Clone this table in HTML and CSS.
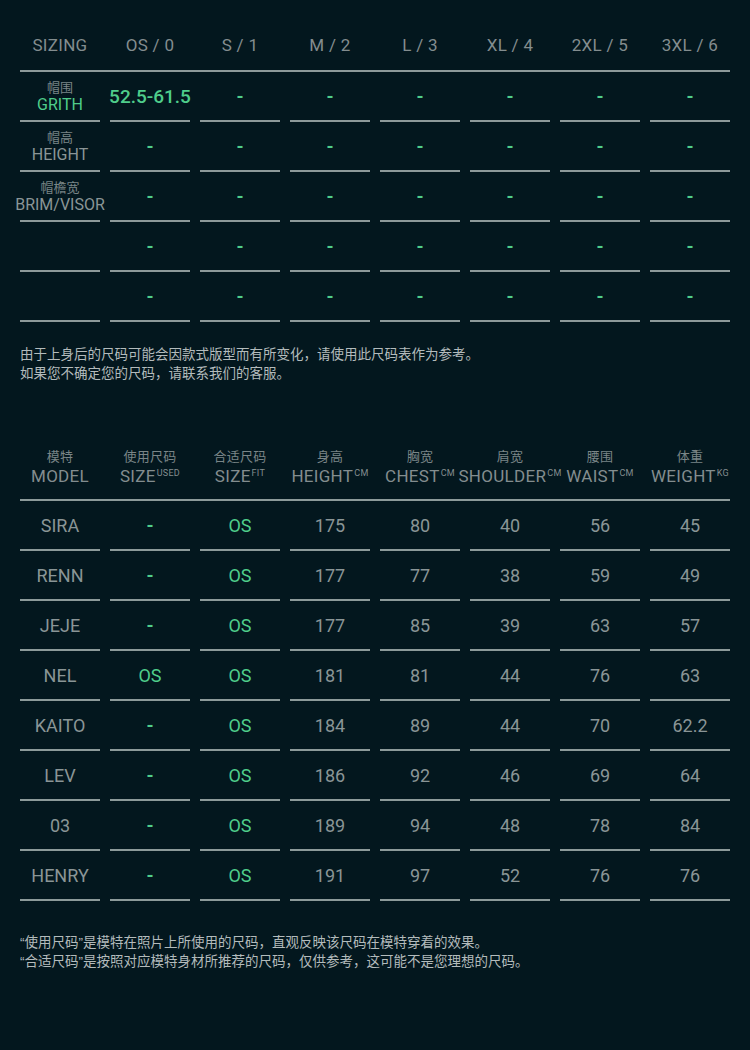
FILE: index.html
```html
<!DOCTYPE html>
<html lang="zh">
<head>
<meta charset="utf-8">
<title>Sizing</title>
<link rel="stylesheet" href="styles.css">
</head>
<body>
<main class="page">
  <section class="table sizing">
    <div class="thead">
      <div class="th">SIZING</div>
      <div class="th">OS / 0</div>
      <div class="th">S / 1</div>
      <div class="th">M / 2</div>
      <div class="th">L / 3</div>
      <div class="th">XL / 4</div>
      <div class="th">2XL / 5</div>
      <div class="th">3XL / 6</div>
    </div>
    <div class="tbody">
      <div class="td label"><span class="zh">帽围</span><span class="en green">GRITH</span></div>
      <div class="td green big">52.5-61.5</div>
      <div class="td green dash">-</div><div class="td green dash">-</div><div class="td green dash">-</div><div class="td green dash">-</div><div class="td green dash">-</div><div class="td green dash">-</div>

      <div class="td label"><span class="zh">帽高</span><span class="en">HEIGHT</span></div>
      <div class="td green dash">-</div><div class="td green dash">-</div><div class="td green dash">-</div><div class="td green dash">-</div><div class="td green dash">-</div><div class="td green dash">-</div><div class="td green dash">-</div>

      <div class="td label"><span class="zh">帽檐宽</span><span class="en">BRIM/VISOR</span></div>
      <div class="td green dash">-</div><div class="td green dash">-</div><div class="td green dash">-</div><div class="td green dash">-</div><div class="td green dash">-</div><div class="td green dash">-</div><div class="td green dash">-</div>

      <div class="td label"></div>
      <div class="td green dash">-</div><div class="td green dash">-</div><div class="td green dash">-</div><div class="td green dash">-</div><div class="td green dash">-</div><div class="td green dash">-</div><div class="td green dash">-</div>

      <div class="td label"></div>
      <div class="td green dash">-</div><div class="td green dash">-</div><div class="td green dash">-</div><div class="td green dash">-</div><div class="td green dash">-</div><div class="td green dash">-</div><div class="td green dash">-</div>
    </div>
  </section>

  <p class="note first-note">由于上身后的尺码可能会因款式版型而有所变化，请使用此尺码表作为参考。<br>如果您不确定您的尺码，请联系我们的客服。</p>

  <section class="table models">
    <div class="thead tall">
      <div class="th two"><span class="zh">模特</span><span class="en">MODEL</span></div>
      <div class="th two"><span class="zh">使用尺码</span><span class="en">SIZE<sup>USED</sup></span></div>
      <div class="th two"><span class="zh">合适尺码</span><span class="en">SIZE<sup>FIT</sup></span></div>
      <div class="th two"><span class="zh">身高</span><span class="en">HEIGHT<sup>CM</sup></span></div>
      <div class="th two"><span class="zh">胸宽</span><span class="en">CHEST<sup>CM</sup></span></div>
      <div class="th two"><span class="zh">肩宽</span><span class="en">SHOULDER<sup>CM</sup></span></div>
      <div class="th two"><span class="zh">腰围</span><span class="en">WAIST<sup>CM</sup></span></div>
      <div class="th two"><span class="zh">体重</span><span class="en">WEIGHT<sup>KG</sup></span></div>
    </div>
    <div class="tbody">
      <div class="td">SIRA</div><div class="td green dash">-</div><div class="td green">OS</div><div class="td">175</div><div class="td">80</div><div class="td">40</div><div class="td">56</div><div class="td">45</div>
      <div class="td">RENN</div><div class="td green dash">-</div><div class="td green">OS</div><div class="td">177</div><div class="td">77</div><div class="td">38</div><div class="td">59</div><div class="td">49</div>
      <div class="td">JEJE</div><div class="td green dash">-</div><div class="td green">OS</div><div class="td">177</div><div class="td">85</div><div class="td">39</div><div class="td">63</div><div class="td">57</div>
      <div class="td">NEL</div><div class="td green">OS</div><div class="td green">OS</div><div class="td">181</div><div class="td">81</div><div class="td">44</div><div class="td">76</div><div class="td">63</div>
      <div class="td">KAITO</div><div class="td green dash">-</div><div class="td green">OS</div><div class="td">184</div><div class="td">89</div><div class="td">44</div><div class="td">70</div><div class="td">62.2</div>
      <div class="td">LEV</div><div class="td green dash">-</div><div class="td green">OS</div><div class="td">186</div><div class="td">92</div><div class="td">46</div><div class="td">69</div><div class="td">64</div>
      <div class="td">03</div><div class="td green dash">-</div><div class="td green">OS</div><div class="td">189</div><div class="td">94</div><div class="td">48</div><div class="td">78</div><div class="td">84</div>
      <div class="td">HENRY</div><div class="td green dash">-</div><div class="td green">OS</div><div class="td">191</div><div class="td">97</div><div class="td">52</div><div class="td">76</div><div class="td">76</div>
    </div>
  </section>

  <p class="note last-note">“使用尺码”是模特在照片上所使用的尺码，直观反映该尺码在模特穿着的效果。<br>“合适尺码”是按照对应模特身材所推荐的尺码，仅供参考，这可能不是您理想的尺码。</p>
</main>
</body>
</html>
```

FILE: styles.css
```css
html, body {
  margin: 0;
  padding: 0;
  background: #03171e;
}

body {
  width: 750px;
  min-height: 1050px;
  font-family: "Roboto", "Noto Sans CJK SC", sans-serif;
  color: #8a9596;
}

.page {
  padding: 20px 20px 0 20px;
}

.thead,
.tbody {
  display: grid;
  grid-template-columns: repeat(8, 80px);
  column-gap: 10px;
}

.thead {
  border-bottom: 2px solid #8d9a9a;
}

.th {
  height: 50px;
  display: flex;
  align-items: center;
  justify-content: center;
  font-size: 17px;
  letter-spacing: 0.3px;
  color: #838d8f;
  white-space: nowrap;
}

.thead.tall .th {
  height: 52px;
  padding-top: 8px;
  padding-bottom: 0;
  flex-direction: column;
  justify-content: flex-start;
  align-items: center;
}

.th .zh,
.td .zh {
  font-family: "Noto Sans CJK SC", sans-serif;
  font-size: 13px;
  line-height: 18px;
  color: #7a8587;
}

.th .en {
  font-size: 17px;
  line-height: 22px;
  white-space: nowrap;
}

.th sup {
  font-size: 9px;
  vertical-align: 0;
  position: relative;
  top: -6px;
  margin-left: 1px;
}

.td {
  height: 48px;
  border-bottom: 2px solid #8d9a9a;
  display: flex;
  flex-direction: column;
  align-items: center;
  justify-content: center;
  font-size: 18px;
  color: #8a9596;
  white-space: nowrap;
}

.td.label .en {
  font-size: 16px;
  line-height: 20px;
  color: #8a9596;
}

.td.label .zh {
  line-height: 16px;
}

.td.label {
  padding-top: 2px;
  height: 46px;
}

.green,
.td.label .en.green {
  color: #4fcd8b;
}

.td.big {
  font-size: 19px;
  font-weight: 500;
}

.td.dash {
  font-weight: 700;
  font-size: 18px;
}

.note {
  margin: 0;
  font-family: "Liberation Sans", "Noto Sans CJK SC", sans-serif;
  font-size: 13.5px;
  line-height: 19px;
  color: #b3bbbc;
}

.first-note {
  margin-top: 23px;
  margin-bottom: 0;
}

.models {
  margin-top: 56px;
}

.last-note {
  margin-top: 32px;
}
```
